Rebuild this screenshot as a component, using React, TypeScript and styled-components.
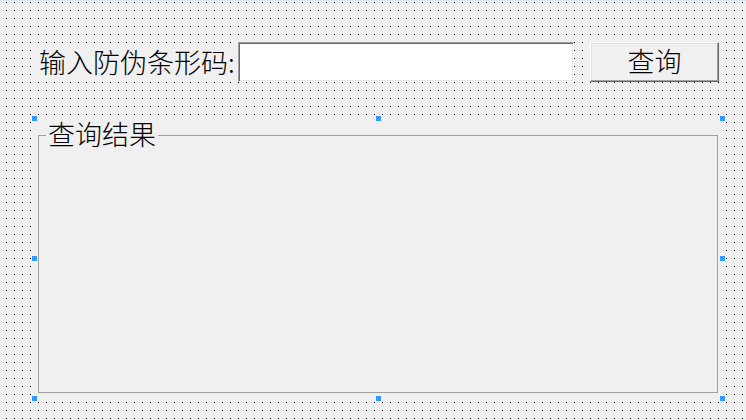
import React from "react";
import styled, { createGlobalStyle } from "styled-components";

const GlobalStyle = createGlobalStyle`
  html, body {
    margin: 0;
    padding: 0;
    background: #f0f0f0;
    overflow: hidden;
  }
  * { box-sizing: border-box; }
`;

const Canvas = styled.div`
  width: 746px;
  height: 420px;
  border-top: 1px solid #d9e4f2;
  padding: 41px 0 0 34px;
  display: flex;
  flex-direction: column;
  background-color: #000;
  background-image:
    linear-gradient(to right, transparent 1px, #f0f0f0 1px),
    linear-gradient(to bottom, transparent 1px, #f0f0f0 1px);
  background-size: 8px 8px;
  background-position: 6px 2px;
  background-origin: border-box;
  font-family: "Noto Sans CJK SC", "Noto Sans", sans-serif;
  font-weight: 300;
  color: #000;
`;

const Row = styled.div`
  display: flex;
  height: 40px;
`;

const Label = styled.div`
  width: 204px;
  height: 36px;
  align-self: flex-end;
  padding-left: 5px;
  background: #f0f0f0;
  font-size: 27px;
  line-height: 31px;
  white-space: nowrap;
`;

const Input = styled.input`
  width: 336px;
  height: 40px;
  margin: 0;
  padding: 0 4px;
  background: #fff;
  border-style: solid;
  border-width: 1px;
  border-color: #a0a0a0 #ffffff #ffffff #a0a0a0;
  box-shadow: inset 1px 1px 0 #696969, inset -1px -1px 0 #e3e3e3;
  outline: none;
  font-family: inherit;
  font-size: 20px;
`;

const Button = styled.button`
  width: 129px;
  height: 40px;
  margin: 0 0 0 16px;
  padding: 0 0 3px 0;
  background: #f0f0f0;
  border-style: solid;
  border-width: 1px;
  border-color: #ffffff #696969 #696969 #ffffff;
  box-shadow: inset -1px -1px 0 #a0a0a0, inset 1px 1px 0 #e3e3e3;
  font-family: inherit;
  font-weight: inherit;
  font-size: 27px;
  line-height: 33px;
  color: #000;
`;

const GroupWidget = styled.div`
  position: relative;
  margin-top: 36px;
  width: 688px;
  height: 280px;
  padding: 17px 4px 5px 4px;
  background: #f0f0f0;
`;

const Frame = styled.div`
  position: relative;
  height: 100%;
  border: 1px solid #a0a0a0;
`;

const Title = styled.div`
  position: absolute;
  top: -18px;
  left: 7px;
  padding: 0 2px;
  background: #f0f0f0;
  font-size: 27px;
  line-height: 32px;
  white-space: nowrap;
`;

const Handle = styled.div<{ $x: string; $y: string }>`
  position: absolute;
  left: ${(p) => p.$x};
  top: ${(p) => p.$y};
  width: 5px;
  height: 5px;
  margin: -2px 0 0 -2px;
  background: #3399ff;
`;

const handles: Array<[string, string]> = [
  ["0%", "0%"],
  ["50%", "0%"],
  ["100%", "0%"],
  ["0%", "50%"],
  ["100%", "50%"],
  ["0%", "100%"],
  ["50%", "100%"],
  ["100%", "100%"],
];

export default function App() {
  return (
    <>
      <GlobalStyle />
      <Canvas>
        <Row>
          <Label>输入防伪条形码:</Label>
          <Input type="text" />
          <Button>查询</Button>
        </Row>
        <GroupWidget>
          <Frame>
            <Title>查询结果</Title>
          </Frame>
          {handles.map(([x, y], i) => (
            <Handle key={i} $x={x} $y={y} />
          ))}
        </GroupWidget>
      </Canvas>
    </>
  );
}
